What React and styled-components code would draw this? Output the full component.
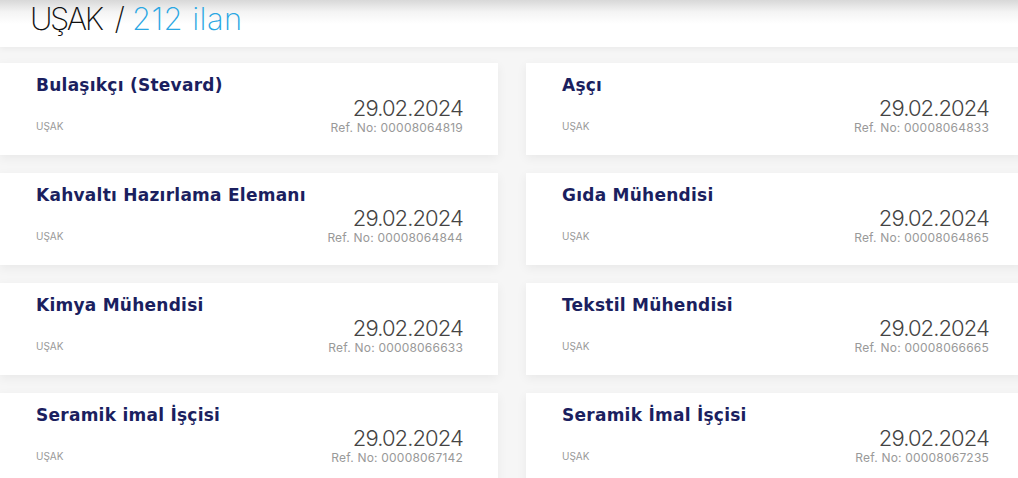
import React from 'react'
import styled, { createGlobalStyle } from 'styled-components'

const jobs = [
  { title: 'Bulaşıkçı (Stevard)', city: 'UŞAK', date: '29.02.2024', ref: '00008064819' },
  { title: 'Aşçı', city: 'UŞAK', date: '29.02.2024', ref: '00008064833' },
  { title: 'Kahvaltı Hazırlama Elemanı', city: 'UŞAK', date: '29.02.2024', ref: '00008064844' },
  { title: 'Gıda Mühendisi', city: 'UŞAK', date: '29.02.2024', ref: '00008064865' },
  { title: 'Kimya Mühendisi', city: 'UŞAK', date: '29.02.2024', ref: '00008066633' },
  { title: 'Tekstil Mühendisi', city: 'UŞAK', date: '29.02.2024', ref: '00008066665' },
  { title: 'Seramik imal İşçisi', city: 'UŞAK', date: '29.02.2024', ref: '00008067142' },
  { title: 'Seramik İmal İşçisi', city: 'UŞAK', date: '29.02.2024', ref: '00008067235' },
]

function App() {
  return (
    <>
      <GlobalStyle />
      <Page>
        <Header>
          <City>UŞAK</City>
          <Slash>/</Slash>
          <Count>212 ilan</Count>
        </Header>

        <Grid>
          {jobs.map((job, i) => (
            <Card key={i}>
              <JobTitle>{job.title}</JobTitle>
              <Bottom>
                <Place>{job.city}</Place>
                <Meta>
                  <PostDate>{job.date}</PostDate>
                  <Ref>Ref. No: {job.ref}</Ref>
                </Meta>
              </Bottom>
            </Card>
          ))}
        </Grid>
      </Page>
    </>
  )
}

export default App

const GlobalStyle = createGlobalStyle`
  html, body {
    margin: 0;
    padding: 0;
    background: #f6f6f6;
    overflow: hidden;
  }
  body {
    font-family: Inter, "Noto Sans", sans-serif;
  }
`

const Page = styled.div`
  width: 1024px;
  min-height: 478px;
  background: #f6f6f6;
`

const Header = styled.div`
  height: 47px;
  padding-left: 30px;
  display: flex;
  align-items: baseline;
  background: linear-gradient(#d8d8d8 0px, #f4f4f4 12px, #ffffff 24px);
  box-shadow: 0 2px 6px rgba(0, 0, 0, 0.05);
  font-weight: 200;
  font-size: 31px;
  line-height: 38px;
`

const City = styled.span`
  color: #111;
  letter-spacing: -2.5px;
`

const Slash = styled.span`
  color: #111;
  margin: 0 7px 0 13px;
`

const Count = styled.span`
  color: #2aa7e3;
  letter-spacing: 0.4px;
`

const Grid = styled.div`
  display: grid;
  grid-template-columns: 498px 498px;
  column-gap: 28px;
  row-gap: 18px;
  padding-top: 16px;
`

const Card = styled.div`
  height: 92px;
  box-sizing: border-box;
  padding: 11px 35px 0 36px;
  background: #fff;
  box-shadow: 0 3px 10px rgba(0, 0, 0, 0.06);
`

const JobTitle = styled.div`
  color: #1b1f5f;
  font-family: "DejaVu Sans", Inter, sans-serif;
  font-weight: 700;
  font-size: 17px;
  line-height: 22px;
  letter-spacing: 0.25px;
`

const Bottom = styled.div`
  display: flex;
  justify-content: space-between;
  align-items: flex-end;
`

const Place = styled.div`
  color: #999;
  font-size: 10px;
  line-height: 12px;
  margin-bottom: 4px;
`

const Meta = styled.div`
  text-align: right;
`

const PostDate = styled.div`
  color: #444;
  font-weight: 300;
  font-size: 22px;
  line-height: 24px;
  letter-spacing: -0.9px;
`

const Ref = styled.div`
  color: #999;
  font-size: 12px;
  line-height: 16px;
  letter-spacing: 0.2px;
`
